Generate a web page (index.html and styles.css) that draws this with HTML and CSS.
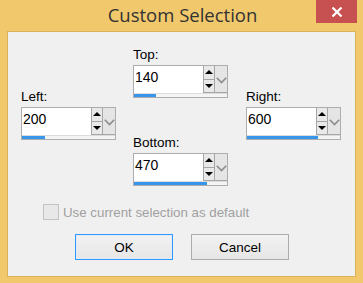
FILE: index.html
```html
<!DOCTYPE html>
<html lang="en">
<head>
    <meta charset="UTF-8">
    <title>Custom Selection</title>
    <link rel="stylesheet" href="styles.css">
</head>
<body>
    <div class="window">
        <div class="titlebar">
            <span class="title">Custom Selection</span>
            <div class="close">
                <svg width="12" height="10" viewBox="0 0 12 10"><path d="M1.5 0.5 L10.5 9.5 M10.5 0.5 L1.5 9.5" stroke="#fff" stroke-width="2.2"/></svg>
            </div>
        </div>
        <div class="client">
            <div class="controls">
                <div class="col col-left">
                    <div class="group">
                        <label>Left:</label>
                        <div class="spin">
                            <div class="field">200</div>
                            <div class="arrows">
                                <span class="arr up"></span>
                                <span class="arr down"></span>
                            </div>
                            <div class="drop"><svg width="11" height="7" viewBox="0 0 11 7"><path d="M0.8 0.8 L5.5 5.6 L10.2 0.8" fill="none" stroke="#8c8c8c" stroke-width="1.6"/></svg></div>
                            <div class="bar"><span class="fill" style="width:25%"></span></div>
                        </div>
                    </div>
                </div>
                <div class="col col-mid">
                    <div class="group">
                        <label>Top:</label>
                        <div class="spin">
                            <div class="field">140</div>
                            <div class="arrows">
                                <span class="arr up"></span>
                                <span class="arr down"></span>
                            </div>
                            <div class="drop"><svg width="11" height="7" viewBox="0 0 11 7"><path d="M0.8 0.8 L5.5 5.6 L10.2 0.8" fill="none" stroke="#8c8c8c" stroke-width="1.6"/></svg></div>
                            <div class="bar"><span class="fill" style="width:24%"></span></div>
                        </div>
                    </div>
                    <div class="group">
                        <label>Bottom:</label>
                        <div class="spin">
                            <div class="field">470</div>
                            <div class="arrows">
                                <span class="arr up"></span>
                                <span class="arr down"></span>
                            </div>
                            <div class="drop"><svg width="11" height="7" viewBox="0 0 11 7"><path d="M0.8 0.8 L5.5 5.6 L10.2 0.8" fill="none" stroke="#8c8c8c" stroke-width="1.6"/></svg></div>
                            <div class="bar"><span class="fill" style="width:79%"></span></div>
                        </div>
                    </div>
                </div>
                <div class="col col-right">
                    <div class="group">
                        <label>Right:</label>
                        <div class="spin">
                            <div class="field">600</div>
                            <div class="arrows">
                                <span class="arr up"></span>
                                <span class="arr down"></span>
                            </div>
                            <div class="drop"><svg width="11" height="7" viewBox="0 0 11 7"><path d="M0.8 0.8 L5.5 5.6 L10.2 0.8" fill="none" stroke="#8c8c8c" stroke-width="1.6"/></svg></div>
                            <div class="bar"><span class="fill" style="width:76%"></span></div>
                        </div>
                    </div>
                </div>
            </div>
            <div class="check">
                <span class="box"></span>
                <span class="check-label">Use current selection as default</span>
            </div>
            <div class="buttons">
                <button class="btn btn-default">OK</button>
                <button class="btn">Cancel</button>
            </div>
        </div>
    </div>
</body>
</html>
```

FILE: styles.css
```css
body {
    margin: 0;
    font-family: "Liberation Sans", Arial, sans-serif;
    font-size: 13px;
    color: #000;
}
.window {
    width: 363px;
    height: 283px;
    background: #f1c86c;
    display: flex;
    flex-direction: column;
}
.titlebar {
    position: relative;
    height: 31px;
    display: flex;
    justify-content: center;
}
.title {
    font-family: "Open Sans", "Noto Sans", sans-serif;
    font-size: 18.5px;
    color: #333;
    line-height: 30px;
    padding-left: 2px;
}
.close {
    position: absolute;
    top: 0;
    right: 6px;
    width: 41px;
    height: 23px;
    background: #c75050;
    display: flex;
    align-items: center;
    justify-content: center;
}
.client {
    margin: 0 7px;
    border: 1px solid #d9b35c;
    background: #f0f0f0;
    padding: 15px 0 0 13px;
    box-sizing: border-box;
    height: 246px;
}
.controls {
    display: flex;
    gap: 17px;
}
.col {
    display: flex;
    flex-direction: column;
    gap: 37px;
}
.col-left {
    padding-top: 42px;
}
.col-right {
    padding-top: 42px;
    margin-left: 1px;
}
.group label {
    display: block;
    height: 15px;
    line-height: 15px;
    margin-bottom: 3px;
    font-size: 13.5px;
}
.spin {
    width: 95px;
    height: 33px;
    box-sizing: border-box;
    border: 1px solid #adadad;
    background: #fff;
    display: grid;
    grid-template-columns: 1fr 11px 13px;
    grid-template-rows: 1fr 4px;
}
.field {
    padding: 3px 0 0 1px;
    line-height: 16px;
    font-size: 14px;
}
.arrows {
    display: flex;
    flex-direction: column;
}
.arr {
    flex: 1;
    border: 1px solid #a6a6a6;
    border-top: none;
    border-right: none;
    background: #e9e9e9;
    position: relative;
}
.arr::after {
    content: "";
    position: absolute;
    left: 1px;
    top: 4px;
    border-left: 4px solid transparent;
    border-right: 4px solid transparent;
}
.arr.up::after {
    border-bottom: 4px solid #000;
}
.arr.down::after {
    border-top: 4px solid #000;
}
.drop {
    border-left: 1px solid #a6a6a6;
    border-bottom: 1px solid #a6a6a6;
    background: #e5e5e5;
    display: flex;
    align-items: center;
    justify-content: center;
    padding-top: 2px;
}
.bar {
    grid-column: 1 / -1;
    background: #f4f4f4;
    border-top: 1px solid #dcdcdc;
}
.fill {
    display: block;
    height: 3px;
    background: #3795ea;
}
.check {
    display: flex;
    align-items: center;
    margin: 18px 0 0 22px;
    color: #a0a0a0;
    font-size: 13.3px;
}
.box {
    width: 14px;
    height: 14px;
    border: 1px solid #c4c4c4;
    background: #e8e8e8;
    margin-right: 4px;
}
.buttons {
    display: flex;
    gap: 18px;
    margin: 14px 0 0 54px;
}
.btn {
    width: 98px;
    height: 26px;
    font-family: "Liberation Sans", Arial, sans-serif;
    font-size: 13.5px;
    color: #000;
    background: linear-gradient(#f2f2f2, #e6e6e6);
    border: 1px solid #acacac;
    padding: 0;
}
.btn-default {
    border-color: #3399ff;
    box-shadow: inset 0 0 0 1px #e0ecf9;
}
```
